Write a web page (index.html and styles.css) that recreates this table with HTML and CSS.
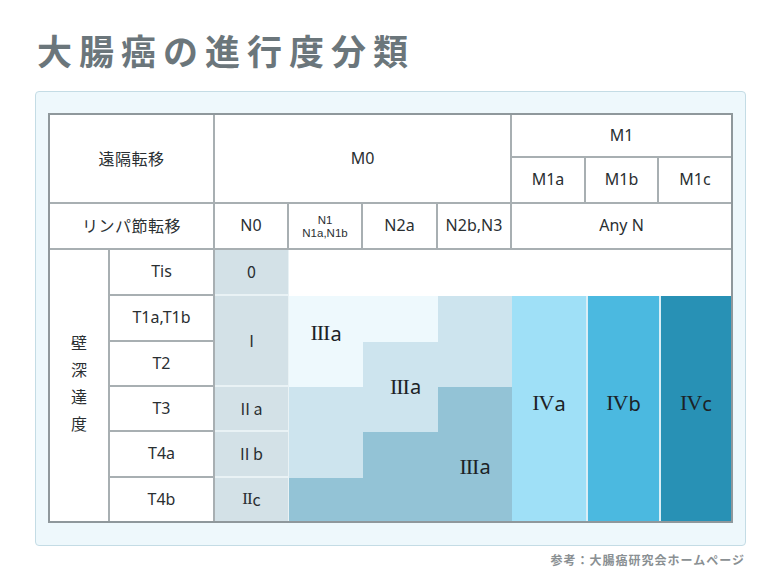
FILE: index.html
```html
<!DOCTYPE html>
<html lang="ja">
<head>
<meta charset="utf-8">
<title>大腸癌の進行度分類</title>
<link rel="stylesheet" href="styles.css">
</head>
<body>
<h1 class="title">大腸癌の進行度分類</h1>
<div class="panel">
  <div class="stage-table">
    <div class="c line-r line-b a-dm label-jp">遠隔転移</div>
    <div class="c line-r line-b a-m0">M0</div>
    <div class="c line-b a-m1">M1</div>
    <div class="c line-r line-b a-xa">M1a</div>
    <div class="c line-r line-b a-xb">M1b</div>
    <div class="c line-b a-xc">M1c</div>
    <div class="c line-r line-b a-ln label-jp">リンパ節転移</div>
    <div class="c line-r line-b a-n0">N0</div>
    <div class="c line-r line-b a-n1 small"><span>N1</span><span>N1a,N1b</span></div>
    <div class="c line-r line-b a-n2">N2a</div>
    <div class="c line-r line-b a-n3">N2b,N3</div>
    <div class="c line-b a-an">Any N</div>

    <div class="c line-r a-wd vertical"><span>壁</span><span>深</span><span>達</span><span>度</span></div>
    <div class="c line-r line-b a-ts">Tis</div>
    <div class="c line-r line-b a-t1">T1a,T1b</div>
    <div class="c line-r line-b a-t2">T2</div>
    <div class="c line-r line-b a-t3">T3</div>
    <div class="c line-r line-b a-t4">T4a</div>
    <div class="c line-r a-t5">T4b</div>

    <div class="c stage0 sep-b a-s0">0</div>
    <div class="c stage0 sep-b a-s1">I</div>
    <div class="c stage0 sep-b a-s2">II a</div>
    <div class="c stage0 sep-b a-s3">II b</div>
    <div class="c stage0 a-s4"><span class="rn rn-sm">II</span>c</div>

    <div class="c blank a-wt"></div>

    <div class="c light roman a-la shift-up"><span class="rn">III</span>a</div>
    <div class="c light a-lb"></div>
    <div class="c mid a-mc"></div>
    <div class="c mid roman a-mb shift-right"><span class="rn">III</span>a</div>
    <div class="c mid a-ma"></div>
    <div class="c dark a-da"></div>
    <div class="c dark a-db"></div>
    <div class="c dark roman a-dc shift-down"><span class="rn">III</span>a</div>

    <div class="c iva roman a-va shift-up-sm"><span class="rn">IV</span>a</div>
    <div class="c ivb roman sep-l a-vb shift-up-sm"><span class="rn">IV</span>b</div>
    <div class="c ivc roman sep-l a-vc shift-up-sm"><span class="rn">IV</span>c</div>
  </div>
</div>
<p class="source">参考：大腸癌研究会ホームページ</p>
</body>
</html>
```
FILE: styles.css
```css
* {
  box-sizing: border-box;
}

body {
  margin: 0;
  background: #ffffff;
  font-family: "Noto Sans", "Noto Sans CJK JP", sans-serif;
  color: #2a2f32;
}

.title {
  margin: 0;
  padding: 30px 0 0 37px;
  height: 91px;
  font-family: "Noto Sans CJK JP", sans-serif;
  font-size: 35px;
  line-height: 40px;
  font-weight: 700;
  letter-spacing: 7px;
  color: #6b767b;
}

.panel {
  margin-left: 35px;
  width: 711px;
  height: 455px;
  padding: 21px 12px 22px 12px;
  background: #eef8fc;
  border: 1px solid #c4dce5;
  border-radius: 4px;
}

.stage-table {
  display: grid;
  grid-template-columns: 60px 105px 74px 74px 75px 74px 74px 73px 72px;
  grid-template-rows: 43px 46px 46px 46px 46px 45px 45px 46px 43px;
  grid-template-areas:
    "dm dm m0 m0 m0 m0 m1 m1 m1"
    "dm dm m0 m0 m0 m0 xa xb xc"
    "ln ln n0 n1 n2 n3 an an an"
    "wd ts s0 wt wt wt wt wt wt"
    "wd t1 s1 la lb mc va vb vc"
    "wd t2 s1 la mb mc va vb vc"
    "wd t3 s2 ma mb dc va vb vc"
    "wd t4 s3 ma db dc va vb vc"
    "wd t5 s4 da db dc va vb vc";
  border: 2px solid #8f989c;
  background: #ffffff;
}

.c {
  display: flex;
  align-items: center;
  justify-content: center;
  text-align: center;
  background: #ffffff;
  font-size: 16px;
  line-height: 1.2;
}

.line-r { border-right: 2px solid #a8afb2; }
.line-b { border-bottom: 2px solid #a8afb2; }
.sep-b { border-bottom: 2px solid #e9f2f5; }
.sep-l { border-left: 2px solid #d9eef6; }

.label-jp {
  font-family: "Noto Sans CJK JP", sans-serif;
  font-size: 16px;
  letter-spacing: 0.5px;
}

.small {
  flex-direction: column;
  font-family: "Liberation Sans", sans-serif;
  font-size: 11.5px;
  line-height: 13px;
  padding-top: 1px;
}

.small span {
  display: block;
}

.vertical {
  flex-direction: column;
  gap: 9px;
  font-family: "Noto Sans CJK JP", sans-serif;
  font-size: 16px;
  line-height: 18px;
  padding-bottom: 6px;
}

.a-dm { grid-area: dm; }
.a-m0 { grid-area: m0; }
.a-m1 { grid-area: m1; }
.a-xa { grid-area: xa; }
.a-xb { grid-area: xb; }
.a-xc { grid-area: xc; }
.a-ln { grid-area: ln; }
.a-n0 { grid-area: n0; }
.a-n1 { grid-area: n1; }
.a-n2 { grid-area: n2; }
.a-n3 { grid-area: n3; }
.a-an { grid-area: an; }
.a-wd { grid-area: wd; }
.a-ts { grid-area: ts; }
.a-t1 { grid-area: t1; }
.a-t2 { grid-area: t2; }
.a-t3 { grid-area: t3; }
.a-t4 { grid-area: t4; }
.a-t5 { grid-area: t5; }
.a-s0 { grid-area: s0; }
.a-s1 { grid-area: s1; }
.a-s2 { grid-area: s2; }
.a-s3 { grid-area: s3; }
.a-s4 { grid-area: s4; }
.a-wt { grid-area: wt; }
.a-la { grid-area: la; }
.a-lb { grid-area: lb; }
.a-ma { grid-area: ma; }
.a-mb { grid-area: mb; }
.a-mc { grid-area: mc; }
.a-da { grid-area: da; }
.a-db { grid-area: db; }
.a-dc { grid-area: dc; }
.a-va { grid-area: va; }
.a-vb { grid-area: vb; }
.a-vc { grid-area: vc; }

.stage0 {
  background: #d3e1e7;
  border-right: 1px solid #e9f2f5;
  font-family: "Noto Sans CJK JP", sans-serif;
}

.light { background: #eef9fd; }
.mid { background: #cde4ee; }
.dark { background: #93c3d6; }
.iva { background: #9fe0f7; }
.ivb { background: #4bb9e0; }
.ivc { background: #2891b5; }

.roman {
  font-size: 20px;
  color: #1c2226;
}

.rn {
  font-family: "Liberation Serif", serif;
  font-size: 22px;
  letter-spacing: -1px;
  margin-right: 1px;
}

.rn-sm {
  font-size: 17px;
  color: #2a2f32;
}

.shift-up { padding-bottom: 16px; }
.shift-right { padding-left: 10px; }
.shift-down { padding-top: 26px; }
.shift-up-sm { padding-bottom: 10px; }

.source {
  margin: 6px 0 0 0;
  padding-right: 23px;
  text-align: right;
  font-family: "Noto Sans CJK JP", sans-serif;
  font-size: 12px;
  line-height: 16px;
  font-weight: 700;
  letter-spacing: 1px;
  color: #8a9093;
}
```
